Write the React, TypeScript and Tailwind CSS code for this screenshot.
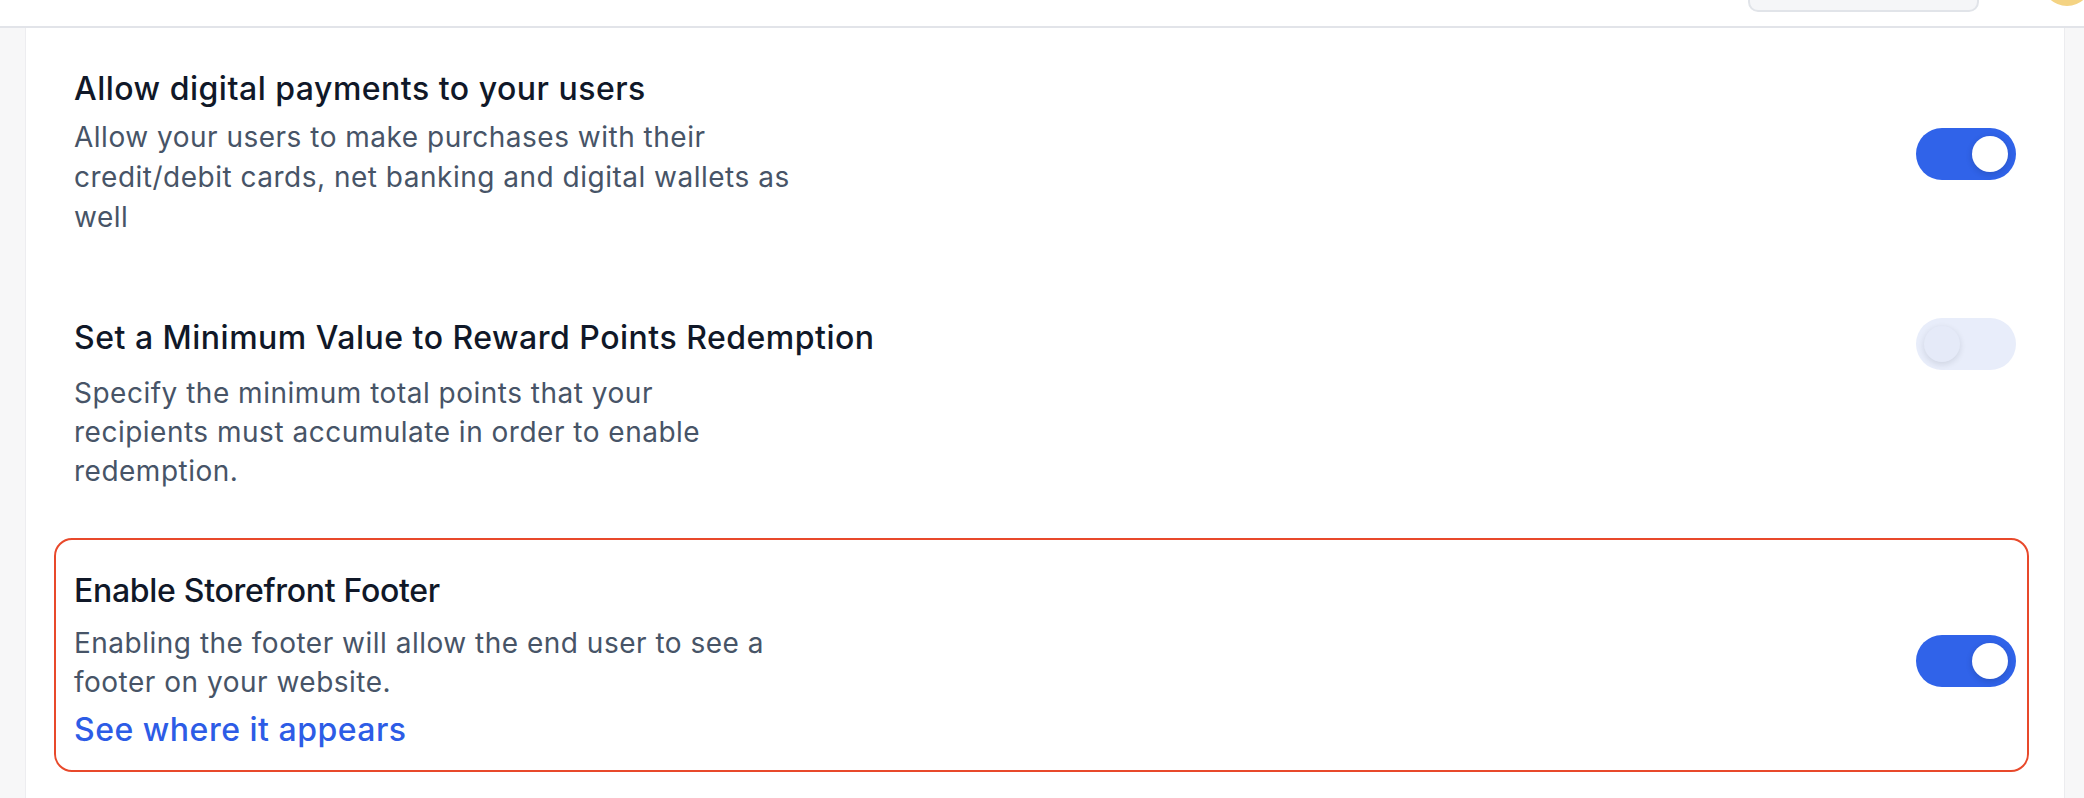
import React from "react";

function Toggle({ on }: { on: boolean }) {
  return (
    <div
      className={
        on
          ? "w-[100px] h-[52px] shrink-0 rounded-full bg-[#3063e9] flex items-center justify-end px-[8px]"
          : "w-[100px] h-[52px] shrink-0 rounded-full bg-[#e8edfa] flex items-center justify-start px-[8px]"
      }
    >
      <div
        className={
          on
            ? "w-[36px] h-[36px] rounded-full bg-white shadow-[0_2px_6px_rgba(16,24,40,0.18)]"
            : "w-[36px] h-[36px] rounded-full bg-[#e5eaf8] shadow-[0_2px_6px_rgba(16,24,40,0.12)]"
        }
      />
    </div>
  );
}

export default function App() {
  const font = { fontFamily: "Inter, 'Noto Sans', 'Liberation Sans', sans-serif" };
  return (
    <div className="w-[2084px] h-[798px] overflow-hidden flex flex-col bg-white" style={font}>
      <div className="h-[28px] shrink-0 bg-white border-b-2 border-[#e2e4e9] flex items-end justify-end overflow-hidden">
        <div className="w-[231px] h-[40px] shrink-0 mb-[14px] rounded-[10px] border-2 border-[#e1e4e9] bg-[#f5f6f8]" />
        <div className="w-[50px] h-[50px] shrink-0 ml-[63px] -mr-[8px] mb-[20px] rounded-full bg-[#f4d383]" />
      </div>
      <div className="flex flex-1">
        <div className="w-[26px] shrink-0 bg-[#f7f7f8] border-r border-[#ededf0]" />
        <div className="flex-1 bg-white px-[48px]">
          <div className="pt-[37px] flex items-center justify-between">
            <div>
              <div className="text-[32px] leading-[48px] font-medium tracking-[0.5px] text-[#101828]">
                Allow digital payments to your users
              </div>
              <div className="mt-[4px] text-[28px] leading-[40px] tracking-[0.5px] text-[#475467]">
                Allow your users to make purchases with their
                <br />
                credit/debit cards, net banking and digital wallets as
                <br />
                well
              </div>
            </div>
            <div className="mt-[6px]">
              <Toggle on />
            </div>
          </div>

          <div className="mt-[77px] flex items-start justify-between">
            <div>
              <div className="text-[32px] leading-[48px] font-medium tracking-[0.5px] text-[#101828]">
                Set a Minimum Value to Reward Points Redemption
              </div>
              <div className="mt-[12px] text-[28px] leading-[39px] tracking-[0.5px] text-[#475467]">
                Specify the minimum total points that your
                <br />
                recipients must accumulate in order to enable
                <br />
                redemption.
              </div>
            </div>
            <div className="mt-[4px]">
              <Toggle on={false} />
            </div>
          </div>

          <div className="mt-[47px] -ml-[20px] -mr-[13px] border-2 border-[#e8492b] rounded-[18px] pl-[18px] pr-[11px] pt-[27px] pb-[16px] flex items-center justify-between">
            <div>
              <div className="text-[32px] leading-[48px] font-medium tracking-[-0.3px] text-[#101828]">
                Enable Storefront Footer
              </div>
              <div className="mt-[9px] text-[28px] leading-[39px] tracking-[0.5px] text-[#475467]">
                Enabling the footer will allow the end user to see a
                <br />
                footer on your website.
              </div>
              <div className="mt-[4px] text-[32px] leading-[48px] font-medium tracking-[0.5px] text-[#2d5ce6]">
                See where it appears
              </div>
            </div>
            <Toggle on />
          </div>
        </div>
        <div className="w-[20px] shrink-0 bg-[#f7f7f8] border-l border-[#ececef]" />
      </div>
    </div>
  );
}
